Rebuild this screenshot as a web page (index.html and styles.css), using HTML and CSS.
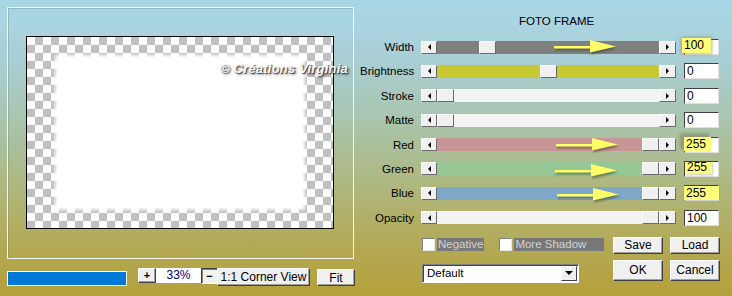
FILE: index.html
```html
<!DOCTYPE html>
<html lang="en">
<head>
    <meta charset="UTF-8">
    <title>Foto Frame</title>
    <link rel="stylesheet" href="styles.css">
</head>
<body>
    <div class="mark">&copy; Cr&eacute;ations Virginia</div>

    <div class="left">
        <div class="frame">
            <div class="preview"><div class="photo"></div></div>
        </div>
        <div class="zoombar">
            <div class="progress"></div>
            <button class="btn plus">+</button>
            <div class="zoomval">33%</div>
            <button class="btn minus">&minus;</button>
            <button class="btn corner">1:1 Corner View</button>
            <button class="btn fit">Fit</button>
        </div>
    </div>

    <div class="right">
        <div class="title">FOTO FRAME</div>
        <div class="rows">
            <div class="row">
                <span class="label">Width</span>
                <div class="slider">
                    <span class="step back"></span>
                    <div class="track grey">
                        <span class="thumb" style="margin-left:42px"></span>
                        <svg class="pointer p-width" width="62" height="16" viewBox="0 0 62 16"><path d="M0 7h37v2.5H0z M36 1 L62 7.5 L36 13.5 Z"/></svg>
                    </div>
                    <span class="step fwd"></span>
                </div>
                <div class="val"><span class="hl hl-width">100</span></div>
            </div>
            <div class="row">
                <span class="label">Brightness</span>
                <div class="slider">
                    <span class="step back"></span>
                    <div class="track olive"><span class="thumb" style="margin-left:103px"></span></div>
                    <span class="step fwd"></span>
                </div>
                <div class="val">0</div>
            </div>
            <div class="row">
                <span class="label">Stroke</span>
                <div class="slider">
                    <span class="step back"></span>
                    <div class="track light"><span class="thumb"></span></div>
                    <span class="step fwd"></span>
                </div>
                <div class="val">0</div>
            </div>
            <div class="row">
                <span class="label">Matte</span>
                <div class="slider">
                    <span class="step back"></span>
                    <div class="track light"><span class="thumb"></span></div>
                    <span class="step fwd"></span>
                </div>
                <div class="val">0</div>
            </div>
            <div class="row">
                <span class="label">Red</span>
                <div class="slider">
                    <span class="step back"></span>
                    <div class="track red">
                        <span class="thumb" style="margin-left:205px"></span>
                        <svg class="pointer p-red" width="62" height="16" viewBox="0 0 62 16"><path d="M0 7h37v2.5H0z M36 1 L62 7.5 L36 13.5 Z"/></svg>
                    </div>
                    <span class="step fwd"></span>
                </div>
                <div class="val"><span class="hl hl-red">255</span></div>
            </div>
            <div class="row">
                <span class="label">Green</span>
                <div class="slider">
                    <span class="step back"></span>
                    <div class="track green">
                        <span class="thumb" style="margin-left:205px"></span>
                        <svg class="pointer p-green" width="62" height="16" viewBox="0 0 62 16"><path d="M0 7h37v2.5H0z M36 1 L62 7.5 L36 13.5 Z"/></svg>
                    </div>
                    <span class="step fwd"></span>
                </div>
                <div class="val"><span class="hl hl-green">255</span></div>
            </div>
            <div class="row">
                <span class="label">Blue</span>
                <div class="slider">
                    <span class="step back"></span>
                    <div class="track blue">
                        <span class="thumb" style="margin-left:205px"></span>
                        <svg class="pointer p-blue" width="62" height="16" viewBox="0 0 62 16"><path d="M0 7h37v2.5H0z M36 1 L62 7.5 L36 13.5 Z"/></svg>
                    </div>
                    <span class="step fwd"></span>
                </div>
                <div class="val"><span class="hl hl-blue">255</span></div>
            </div>
            <div class="row">
                <span class="label">Opacity</span>
                <div class="slider">
                    <span class="step back"></span>
                    <div class="track light"><span class="thumb" style="margin-left:205px"></span></div>
                    <span class="step fwd"></span>
                </div>
                <div class="val">100</div>
            </div>
        </div>

        <div class="lower">
            <div class="opts">
                <div class="checks">
                    <span class="box"></span><span class="chk neg">Negative</span>
                    <span class="box"></span><span class="chk shadow">More Shadow</span>
                </div>
                <div class="select">
                    <span>Default</span>
                    <span class="drop"></span>
                </div>
            </div>
            <div class="btns">
                <button class="btn act">Save</button>
                <button class="btn act">Load</button>
                <button class="btn act big">OK</button>
                <button class="btn act big">Cancel</button>
            </div>
        </div>
    </div>
</body>
</html>
```

FILE: styles.css
```css
* {
    margin: 0;
    padding: 0;
    box-sizing: border-box;
}
body {
    width: 732px;
    height: 296px;
    overflow: hidden;
    display: flex;
    position: relative;
    font-family: "Liberation Sans", Arial, sans-serif;
    font-size: 11px;
    color: #000;
    background: linear-gradient(#a9d7e7 0%, #a9cfd6 20%, #a9c4aa 42%, #afb67a 65%, #b3a852 85%, #b5a03a 100%);
}

/* watermark over the preview */
.mark {
    position: absolute;
    left: 220px;
    top: 61px;
    white-space: nowrap;
    font-family: "Liberation Sans", Arial, sans-serif;
    font-weight: bold;
    font-style: italic;
    font-size: 13px;
    letter-spacing: 0.2px;
    color: #f6f6f6;
    text-shadow: 1px 1px 1px #3a3a3a, 2px 2px 3px rgba(0, 0, 0, 0.4);
    z-index: 0;
}

.left {
    width: 360px;
    padding: 7px 0 0 7px;
}
.frame {
    width: 347px;
    height: 252px;
    border: 1px solid #f4f6f2;
    box-shadow: inset 1px 1px 0 rgba(110, 130, 130, 0.35);
    padding: 28px 0 0 18px;
}
.preview {
    width: 308px;
    height: 193px;
    border: 1px solid #000;
    padding: 20px 30px;
    background: conic-gradient(#c0c0c0 0 25%, #fff 0 50%, #c0c0c0 0 75%, #fff 0) 0 0 / 16px 16px;
}
.photo {
    width: 100%;
    height: 100%;
    background: #fff;
    box-shadow: 0 0 3px 2px rgba(255, 255, 255, 0.9);
}

.btn {
    font-family: "Liberation Sans", Arial, sans-serif;
    font-size: 11px;
    color: #000;
    background: #f0f0f0;
    border: 1px solid;
    border-color: #fff #404040 #404040 #fff;
    box-shadow: inset -1px -1px 0 #a0a0a0;
}

.zoombar {
    display: flex;
    align-items: flex-start;
    margin-top: 9px;
}
.progress {
    width: 120px;
    height: 15px;
    margin-top: 3px;
    background: #0078d7;
    border: 1px solid #fff;
}
.plus {
    width: 18px;
    height: 15px;
    margin-left: 11px;
    font-weight: bold;
    line-height: 11px;
}
.zoomval {
    width: 45px;
    height: 15px;
    background: #fff;
    color: #000080;
    text-align: center;
    line-height: 14px;
    font-size: 12px;
}
.minus {
    width: 17px;
    height: 16px;
    border-color: #404040 #fff #fff #404040;
    box-shadow: inset 1px 1px 0 #808080;
    font-weight: bold;
    line-height: 12px;
}
.corner {
    width: 93px;
    height: 18px;
    margin-left: -1px;
    font-size: 12px;
}
.fit {
    width: 38px;
    height: 17px;
    margin: 1px 0 0 7px;
    font-size: 12px;
}

.right {
    flex: 1;
    position: relative;
    z-index: 1;
    padding-top: 15px;
}
.title {
    margin-left: 159px;
    line-height: 13px;
    margin-bottom: 11px;
    font-size: 11.5px;
}
.rows {
    display: flex;
    flex-direction: column;
    gap: 8.4px;
}
.row {
    display: flex;
    align-items: center;
    height: 16px;
}
.label {
    width: 54px;
    margin-right: 7px;
    text-align: right;
    font-size: 11.5px;
}
.slider {
    width: 255px;
    height: 13px;
    display: flex;
}
.step {
    width: 16px;
    height: 13px;
    background: #f0f0f0;
    border: 1px solid;
    border-color: #fff #6a6a6a #6a6a6a #fff;
    display: flex;
    align-items: center;
    justify-content: center;
}
.step.fwd {
    width: 17px;
}
.step::after {
    content: "";
    border-top: 3px solid transparent;
    border-bottom: 3px solid transparent;
}
.back::after {
    border-right: 3px solid #000;
}
.fwd::after {
    border-left: 3px solid #000;
}
.track {
    flex: 1;
    position: relative;
    display: flex;
}
.thumb {
    width: 17px;
    height: 13px;
    background: #f0f0f0;
    border: 1px solid;
    border-color: #fff #6a6a6a #6a6a6a #fff;
}
.grey { background: #808080; }
.olive { background: #c8c832; }
.light { background: #f3f3f1; }
.red { background: #c89697; }
.green { background: #96c896; }
.blue { background: #7fa7c8; }

.pointer {
    position: absolute;
    top: -2px;
    fill: #ffff66;
    filter: drop-shadow(1px 2px 1px rgba(50, 50, 30, 0.5));
}
.p-width { left: 117px; }
.p-red { left: 119px; top: -1px; }
.p-green { left: 118px; top: 1px; }
.p-blue { left: 120px; top: 0; }

.val {
    position: relative;
    width: 35px;
    height: 16px;
    margin-left: 8px;
    background: #fff;
    border: 1px solid;
    border-color: #404040 #e0e0e0 #e0e0e0 #404040;
    padding-left: 2px;
    line-height: 14px;
    font-size: 12px;
}
.hl {
    position: absolute;
    background: #ffff7a;
    padding-left: 2px;
    line-height: 14px;
}
.hl-width {
    left: -3px;
    top: -2px;
    width: 29px;
    height: 15px;
    box-shadow: 0 0 3px 1px rgba(140, 140, 80, 0.6);
}
.hl-red {
    left: -1px;
    top: -1px;
    width: 27px;
    height: 14px;
    box-shadow: -3px -3px 3px 1px rgba(110, 110, 70, 0.45);
}
.hl-green {
    left: 0;
    top: 0;
    width: 27px;
    height: 12px;
    line-height: 11px;
    box-shadow: 1px 1px 2px rgba(110, 110, 70, 0.4);
}
.hl-blue {
    left: -1px;
    top: 0;
    width: 35px;
    height: 14px;
    box-shadow: 0 0 2px rgba(110, 110, 70, 0.4);
}

.lower {
    display: flex;
    margin-top: 11px;
    padding-left: 62px;
}
.opts {
    width: 191px;
}
.checks {
    display: flex;
    align-items: center;
    height: 13px;
    margin-top: 1px;
}
.box {
    width: 13px;
    height: 13px;
    background: #fff;
    border: 1px solid;
    border-color: #808080 #e8e8e8 #e8e8e8 #808080;
}
.chk {
    height: 13px;
    margin-left: 2px;
    padding: 0 1px;
    background: #787878;
    color: #d2d2d2;
    line-height: 13px;
    font-size: 11.5px;
}
.neg {
    margin-right: 15px;
}
.shadow {
    width: 90px;
}
.select {
    width: 157px;
    height: 19px;
    margin-top: 13px;
    background: #fff;
    border: 1px solid;
    border-color: #808080 #fff #fff #808080;
    box-shadow: inset 1px 1px 0 #404040;
    display: flex;
    align-items: center;
    justify-content: space-between;
    padding: 0 1px 0 4px;
    font-size: 11.5px;
}
.drop {
    width: 16px;
    height: 15px;
    background: #f0f0f0;
    border: 1px solid;
    border-color: #fff #404040 #404040 #fff;
    display: flex;
    align-items: center;
    justify-content: center;
}
.drop::after {
    content: "";
    border-left: 4px solid transparent;
    border-right: 4px solid transparent;
    border-top: 4px solid #000;
}
.btns {
    display: grid;
    grid-template-columns: 50px 50px;
    grid-template-rows: 17px 21px;
    column-gap: 7px;
    row-gap: 6px;
}
.act {
    font-size: 12px;
}
```
